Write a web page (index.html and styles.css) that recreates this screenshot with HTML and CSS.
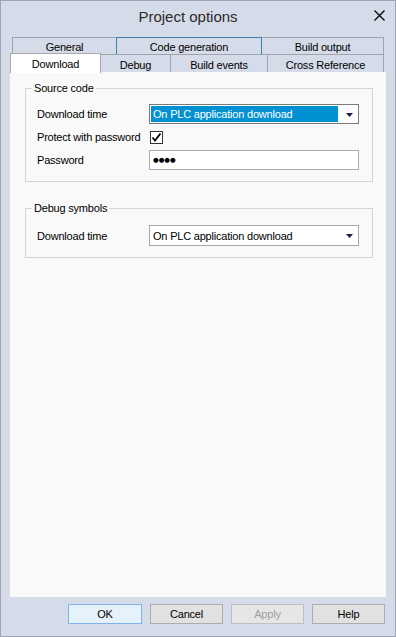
FILE: index.html
```html
<!DOCTYPE html>
<html lang="en">
<head>
    <meta charset="UTF-8">
    <meta name="viewport" content="width=device-width, initial-scale=1.0">
    <title>Project options</title>
    <link rel="stylesheet" href="styles.css">
</head>
<body>
    <div class="window">
        <div class="titlebar">
            <div class="title">Project options</div>
            <div class="close">
                <svg width="11" height="11" viewBox="0 0 11 11">
                    <path d="M0.5 0.5 L10.5 10.5 M10.5 0.5 L0.5 10.5" stroke="#000" stroke-width="1.3" fill="none"/>
                </svg>
            </div>
        </div>

        <div class="tabs">
            <div class="tab-row top">
                <div class="tab tab-general">General</div>
                <div class="tab tab-codegen hover">Code generation</div>
                <div class="tab tab-output">Build output</div>
            </div>
            <div class="tab-row bottom">
                <div class="tab tab-download active">Download</div>
                <div class="tab tab-debug">Debug</div>
                <div class="tab tab-events">Build events</div>
                <div class="tab tab-xref">Cross Reference</div>
            </div>
        </div>

        <div class="panel">
            <fieldset class="group">
                <legend>Source code</legend>
                <div class="form-grid">
                    <label>Download time</label>
                    <div class="combo focused">
                        <span class="combo-text">On PLC application download</span>
                        <svg class="arrow" width="7" height="4" viewBox="0 0 7 4"><path d="M0 0 H7 L3.5 4 Z" fill="#1d1d4a"/></svg>
                    </div>
                    <label>Protect with password</label>
                    <div class="check-cell">
                        <div class="check">
                            <svg width="11" height="11" viewBox="0 0 11 11"><path d="M1.5 5.5 L4 8.5 L9.5 1.5" stroke="#000" stroke-width="1.8" fill="none"/></svg>
                        </div>
                    </div>
                    <label>Password</label>
                    <div class="textbox"><span class="dots">●●●●</span></div>
                </div>
            </fieldset>

            <fieldset class="group">
                <legend>Debug symbols</legend>
                <div class="form-grid">
                    <label>Download time</label>
                    <div class="combo">
                        <span class="combo-text">On PLC application download</span>
                        <svg class="arrow" width="7" height="4" viewBox="0 0 7 4"><path d="M0 0 H7 L3.5 4 Z" fill="#1d1d4a"/></svg>
                    </div>
                </div>
            </fieldset>
        </div>

        <div class="buttons">
            <button class="btn default">OK</button>
            <button class="btn">Cancel</button>
            <button class="btn" disabled>Apply</button>
            <button class="btn">Help</button>
        </div>
    </div>
</body>
</html>
```

FILE: styles.css
```css
* {
    margin: 0;
    padding: 0;
    box-sizing: border-box;
}
body, html {
    font-family: 'Liberation Sans', Arial, sans-serif;
    font-size: 11px;
    letter-spacing: -0.2px;
    color: #000;
    width: 396px;
    height: 637px;
    overflow: hidden;
}
.window {
    width: 396px;
    height: 637px;
    display: flex;
    flex-direction: column;
    background: #d6dbe9;
    border: 1px solid #9ea4b0;
}
.titlebar {
    height: 30px;
    display: flex;
    align-items: center;
}
.title {
    flex: 1;
    text-align: center;
    font-size: 15px;
    letter-spacing: 0;
    color: #2b2b2b;
    padding-left: 4px;
}
.close {
    width: 16px;
    margin-right: 8px;
    display: flex;
    justify-content: center;
    margin-top: -1px;
}
.tabs {
    margin-top: 6px;
}
.tab-row {
    display: flex;
}
.tab-row.top {
    height: 17px;
    padding-left: 11px;
}
.tab-row.bottom {
    height: 18px;
    padding-left: 9px;
}
.tab {
    display: flex;
    align-items: center;
    justify-content: center;
    border: 1px solid #9fa3ab;
    border-bottom: none;
    margin-left: -1px;
    background: #d6dbe9;
    position: relative;
}
.tab-row.top .tab {
    height: 17px;
    padding-top: 1px;
}
.tab-row.bottom .tab {
    height: 18px;
    padding-top: 2px;
}
.tab-general { width: 105px; margin-left: 0; }
.tab-codegen { width: 146px; }
.tab-output { width: 123px; }
.tab.hover {
    border-color: #3c7fb1;
    z-index: 1;
}
.tab-row.bottom .tab.active {
    width: 91px;
    height: 20px;
    margin-top: -1px;
    margin-left: 0;
    padding-top: 0;
    background: #fff;
    border-color: #a9a9a9;
    z-index: 2;
}
.tab-debug { width: 71px; }
.tab-events { width: 98px; }
.tab-xref { width: 117px; }
.panel {
    flex: 1;
    margin: 0 9px;
    background: #f9f9f9;
    padding: 10px 13px 0 15px;
}
.group {
    border: 1px solid #d5d5d5;
    padding: 9px 13px 11px 11px;
    min-width: 0;
}
.group + .group {
    margin-top: 20px;
}
.group legend {
    margin-left: -5px;
    padding: 0 2px;
    line-height: 13px;
}
.form-grid {
    display: grid;
    grid-template-columns: 112px 1fr;
    grid-auto-rows: 20px;
    row-gap: 3px;
    align-items: center;
}
.group + .group .form-grid {
    grid-auto-rows: 21px;
    padding-top: 1px;
}
.combo {
    height: 20px;
    border: 1px solid #a5a7ad;
    background: #fff;
    display: flex;
    align-items: center;
    padding: 1px 0 1px 1px;
}
.group + .group .combo {
    height: 21px;
}
.combo.focused {
    border-color: #7a7a7a;
}
.combo-text {
    flex: 1;
    height: 100%;
    display: flex;
    align-items: center;
    padding-left: 2px;
}
.combo.focused .combo-text {
    background: #0091d2;
    color: #fff;
}
.arrow {
    margin: 1px 5px 0 8px;
}
.check-cell {
    display: flex;
    align-items: center;
}
.check {
    width: 13px;
    height: 13px;
    margin-left: 1px;
    border: 1px solid #333;
    background: #fff;
    display: flex;
    align-items: center;
    justify-content: center;
}
.textbox {
    height: 20px;
    border: 1px solid #abadb3;
    background: #fff;
    display: flex;
    align-items: center;
    padding-left: 3px;
}
.dots {
    font-family: 'DejaVu Sans', sans-serif;
    font-size: 6.5px;
    letter-spacing: 0;
}
.buttons {
    height: 39px;
    display: flex;
    justify-content: flex-end;
    gap: 8px;
    padding: 7px 10px 0 0;
}
.btn {
    width: 73px;
    height: 20px;
    border: 1px solid #adadad;
    background: #e1e1e1;
    font-family: 'Liberation Sans', Arial, sans-serif;
    font-size: 11px;
    letter-spacing: -0.2px;
    color: #000;
}
.btn.default {
    width: 74px;
    border-color: #7eb4ea;
    background: #e5f1fb;
}
.btn:disabled {
    color: #a0a0a0;
    border-color: #bfbfbf;
    background: #e6e6e6;
}
```
